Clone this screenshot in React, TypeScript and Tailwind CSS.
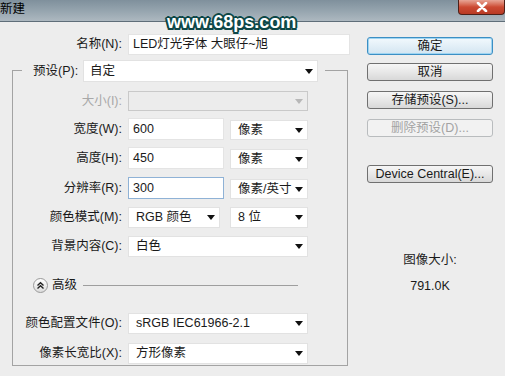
import React from 'react'

const font = "font-['Liberation_Sans','Noto_Sans_CJK_SC',sans-serif]"

const Arrow = ({ light = false }: { light?: boolean }) => (
  <svg width="8" height="5" viewBox="0 0 8 5" className="shrink-0">
    <path d="M0 0 L8 0 L4 5 Z" fill={light ? '#b8b8b8' : '#111'} />
  </svg>
)

const Select = ({
  value,
  w,
  h = 'h-[21px]',
  disabled = false,
  pl = 'pl-[6px]',
}: {
  value: string
  w: string
  h?: string
  disabled?: boolean
  pl?: string
}) => (
  <div
    className={`${w} ${h} ${pl} pr-[4px] flex items-center justify-between border ${
      disabled ? 'bg-[#ececec] border-[#c9c9c9]' : 'bg-white border-[#e2e2e2]'
    }`}
  >
    <span className="leading-none whitespace-nowrap">{value}</span>
    <Arrow light={disabled} />
  </div>
)

const Input = ({ value, w, focus = false }: { value: string; w: string; focus?: boolean }) => (
  <div
    className={`${w} h-[22px] pl-[4px] flex items-center bg-white border ${
      focus ? 'border-[#8fb2d6]' : 'border-[#e4e4e4]'
    }`}
  >
    <span className="leading-none">{value}</span>
  </div>
)

const Row = ({ label, mt, children, gray = false }: { label: string; mt: string; children: React.ReactNode; gray?: boolean }) => (
  <div className={`flex items-center ${mt}`}>
    <div className={`w-[110px] pr-[1px] text-right leading-none whitespace-nowrap ${gray ? 'text-[#a8a8a8]' : ''}`}>{label}</div>
    <div className="ml-[5px] flex items-center">{children}</div>
  </div>
)

const Button = ({ label, mt, primary = false, disabled = false }: { label: string; mt: string; primary?: boolean; disabled?: boolean }) => (
  <div
    className={`${mt} w-[126px] h-[18px] rounded-[3px] border flex items-center justify-center leading-none ${
      primary
        ? 'border-[#3c8fc4] bg-gradient-to-b from-[#f2f9fd] to-[#d3e5f1] shadow-[inset_0_0_0_1px_#9fd5f2]'
        : disabled
        ? 'border-[#b9bcbe] bg-[#f2f2f2] text-[#a3a3a3]'
        : 'border-[#707070] bg-gradient-to-b from-[#f6f6f6] via-[#e8e8e8] to-[#d8d8d8]'
    }`}
  >
    {label}
  </div>
)

export default function App() {
  return (
    <div className={`relative w-[505px] h-[376px] overflow-hidden bg-[#ededed] text-[12.5px] text-[#1a1a1a] ${font}`}>
      {/* Title bar */}
      <div className="h-[22px] border-b border-[#5f6e79] bg-gradient-to-b from-[#7f909c] via-[#95a4ae] to-[#adb8c0] flex items-start justify-between">
        <span className="pt-[3px] leading-none text-[12.5px] text-black">新建</span>
        <div className="w-[47px] h-[15px] rounded-b-[4px] border border-t-0 border-[#4e2018] bg-gradient-to-b from-[#e7a596] via-[#cc4a33] to-[#b83a24] flex items-center justify-center">
          <svg width="12" height="10" viewBox="0 0 12 10">
            <path d="M2 1 L10 9 M10 1 L2 9" stroke="white" strokeWidth="2.6" strokeLinecap="round" />
          </svg>
        </div>
      </div>

      <div className="flex">
        {/* Left column */}
        <div className="w-[367px]">
          <div className="flex items-center mt-[12px]">
            <div className="w-[122px] text-right leading-none">名称(N):</div>
            <div className="ml-[6px] w-[222px] h-[21px] bg-white border border-[#e4e4e4] pl-[4px] flex items-center leading-none">
              LED灯光字体 大眼仔~旭
            </div>
          </div>

          <div className="ml-[12px] mt-[15px] w-[336px] h-[296px] border border-[#a3a3a3]">
            {/* Legend row */}
            <div className="-mt-[11px] ml-[9px] w-fit pl-[11px] pr-[7px] bg-[#ededed] flex items-center">
              <div className="w-[47px] leading-none whitespace-nowrap">预设(P):</div>
              <div className="ml-[3px]">
                <Select value="自定" w="w-[235px]" h="h-[22px]" pl="pl-[6px]" />
              </div>
            </div>

            <Row label="大小(I):" mt="mt-[9px]" gray>
              <Select value="" w="w-[180px]" h="h-[20px]" disabled />
            </Row>

            <Row label="宽度(W):" mt="mt-[7px]">
              <Input value="600" w="w-[96px]" />
              <div className="ml-[6px] mt-[2px]">
                <Select value="像素" w="w-[78px]" h="h-[20px]" pl="pl-[7px]" />
              </div>
            </Row>

            <Row label="高度(H):" mt="mt-[7px]">
              <Input value="450" w="w-[96px]" />
              <div className="ml-[6px] mt-[2px]">
                <Select value="像素" w="w-[78px]" h="h-[20px]" pl="pl-[7px]" />
              </div>
            </Row>

            <Row label="分辨率(R):" mt="mt-[8px]">
              <Input value="300" w="w-[96px]" focus />
              <div className="ml-[6px] mt-[2px]">
                <Select value="像素/英寸" w="w-[78px]" h="h-[20px]" pl="pl-[7px]" />
              </div>
            </Row>

            <Row label="颜色模式(M):" mt="mt-[8px]">
              <Select value="RGB 颜色" w="w-[92px]" h="h-[21px]" pl="pl-[7px]" />
              <div className="ml-[10px]">
                <Select value="8 位" w="w-[78px]" h="h-[21px]" pl="pl-[7px]" />
              </div>
            </Row>

            <Row label="背景内容(C):" mt="mt-[8px]">
              <Select value="白色" w="w-[180px]" h="h-[21px]" pl="pl-[7px]" />
            </Row>

            {/* Advanced */}
            <div className="mt-[21px] ml-[20px] flex items-center">
              <div className="w-[15px] h-[15px] rounded-full border border-[#9a9a9a] bg-gradient-to-b from-white to-[#dcdcdc] flex items-center justify-center">
                <svg width="9" height="9" viewBox="0 0 9 9">
                  <path d="M1.5 4.5 L4.5 1.8 L7.5 4.5 M1.5 7.5 L4.5 4.8 L7.5 7.5" stroke="#222" strokeWidth="1.4" fill="none" />
                </svg>
              </div>
              <span className="ml-[4px] leading-none">高级</span>
              <div className="ml-[6px] w-[215px] h-px bg-[#9e9e9e]" />
            </div>

            <Row label="颜色配置文件(O):" mt="mt-[20px]">
              <Select value="sRGB IEC61966-2.1" w="w-[180px]" h="h-[21px]" pl="pl-[7px]" />
            </Row>

            <Row label="像素长宽比(X):" mt="mt-[9px]">
              <Select value="方形像素" w="w-[180px]" h="h-[21px]" pl="pl-[7px]" />
            </Row>
          </div>
        </div>

        {/* Right column */}
        <div className="w-[126px] flex flex-col">
          <Button label="确定" mt="mt-[15px]" primary />
          <Button label="取消" mt="mt-[8px]" />
          <Button label="存储预设(S)..." mt="mt-[10px]" />
          <Button label="删除预设(D)..." mt="mt-[10px]" disabled />
          <Button label="Device Central(E)..." mt="mt-[28px]" />
          <div className="mt-[69px] text-center leading-[16px]">图像大小:</div>
          <div className="mt-[10px] text-center leading-[16px]">791.0K</div>
        </div>
      </div>

      {/* Watermark */}
      <div className="absolute left-[167px] top-[13px] text-[18px] font-bold leading-none text-white font-['Liberation_Sans',sans-serif] [text-shadow:-2px_0_#0d4747,2px_0_#0d4747,0_-2px_#0d4747,0_2px_#0d4747,-1.5px_-1.5px_#0d4747,1.5px_-1.5px_#0d4747,-1.5px_1.5px_#0d4747,1.5px_1.5px_#0d4747]">
        www.68ps.com
      </div>
    </div>
  )
}
